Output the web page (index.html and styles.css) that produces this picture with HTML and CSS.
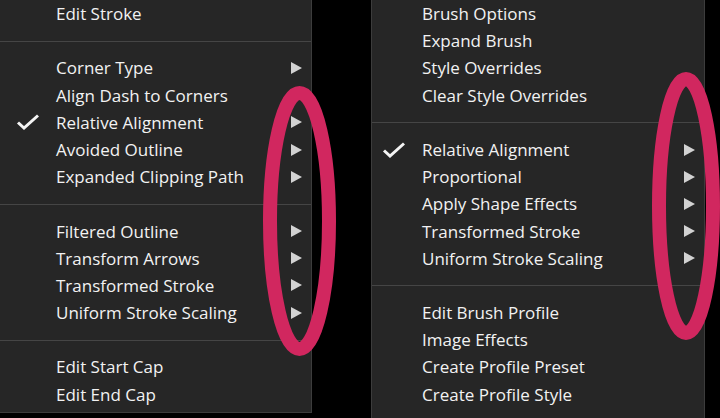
FILE: index.html
```html
<!DOCTYPE html>
<html lang="en">
<head>
    <meta charset="UTF-8">
    <title>Context Menus</title>
    <link rel="stylesheet" href="styles.css">
</head>
<body>
<div class="stage">

    <div class="menu menu-stroke">
        <div class="item"><span class="check"></span><span class="label">Edit Stroke</span></div>
        <div class="sep"></div>
        <div class="item"><span class="check"></span><span class="label">Corner Type</span><span class="arrow"></span></div>
        <div class="item"><span class="check"></span><span class="label">Align Dash to Corners</span></div>
        <div class="item"><span class="check"><svg width="24" height="16" viewBox="0 0 24 16"><polyline points="2,8.5 8,14 22,1.5" /></svg></span><span class="label">Relative Alignment</span><span class="arrow"></span></div>
        <div class="item"><span class="check"></span><span class="label">Avoided Outline</span><span class="arrow"></span></div>
        <div class="item"><span class="check"></span><span class="label">Expanded Clipping Path</span><span class="arrow"></span></div>
        <div class="sep"></div>
        <div class="item"><span class="check"></span><span class="label">Filtered Outline</span><span class="arrow"></span></div>
        <div class="item"><span class="check"></span><span class="label">Transform Arrows</span><span class="arrow"></span></div>
        <div class="item"><span class="check"></span><span class="label">Transformed Stroke</span><span class="arrow"></span></div>
        <div class="item"><span class="check"></span><span class="label">Uniform Stroke Scaling</span><span class="arrow"></span></div>
        <div class="sep"></div>
        <div class="item"><span class="check"></span><span class="label">Edit Start Cap</span></div>
        <div class="item"><span class="check"></span><span class="label">Edit End Cap</span></div>
    </div>

    <div class="menu menu-brush">
        <div class="item"><span class="check"></span><span class="label">Brush Options</span></div>
        <div class="item"><span class="check"></span><span class="label">Expand Brush</span></div>
        <div class="item"><span class="check"></span><span class="label">Style Overrides</span></div>
        <div class="item"><span class="check"></span><span class="label">Clear Style Overrides</span></div>
        <div class="sep"></div>
        <div class="item"><span class="check"><svg width="24" height="16" viewBox="0 0 24 16"><polyline points="2,8.5 8,14 22,1.5" /></svg></span><span class="label">Relative Alignment</span><span class="arrow"></span></div>
        <div class="item"><span class="check"></span><span class="label">Proportional</span><span class="arrow"></span></div>
        <div class="item"><span class="check"></span><span class="label">Apply Shape Effects</span><span class="arrow"></span></div>
        <div class="item"><span class="check"></span><span class="label">Transformed Stroke</span><span class="arrow"></span></div>
        <div class="item"><span class="check"></span><span class="label">Uniform Stroke Scaling</span><span class="arrow"></span></div>
        <div class="sep"></div>
        <div class="item"><span class="check"></span><span class="label">Edit Brush Profile</span></div>
        <div class="item"><span class="check"></span><span class="label">Image Effects</span></div>
        <div class="item"><span class="check"></span><span class="label">Create Profile Preset</span></div>
        <div class="item"><span class="check"></span><span class="label">Create Profile Style</span></div>
    </div>

    <!-- hand-drawn highlight rings over the submenu arrows -->
    <svg class="marks" width="720" height="418" viewBox="0 0 720 418">
        <ellipse cx="299.5" cy="221" rx="29.5" ry="128" />
        <ellipse cx="686" cy="206" rx="27" ry="127" />
    </svg>

</div>
</body>
</html>
```

FILE: styles.css
```css
body {
    margin: 0;
    background-color: #000;
    font-family: "Open Sans", "Noto Sans", sans-serif;
    overflow: hidden;
}
.stage {
    position: relative;
    display: flex;
    align-items: flex-start;
    width: 720px;
    height: 418px;
    overflow: hidden;
}
.menu {
    box-sizing: border-box;
    background-color: #262626;
    color: #f2f2f2;
    font-size: 17px;
}
.menu-stroke {
    width: 312px;
    padding: 0 9px 4px 16px;
    border-right: 1px solid #3c3c3c;
    border-bottom: 1px solid #3c3c3c;
}
.menu-brush {
    width: 334px;
    height: 440px;
    margin-left: 59px;
    padding: 0 9px 0 10px;
    border-left: 1px solid #3c3c3c;
    border-right: 1px solid #3c3c3c;
}
.item {
    display: flex;
    align-items: center;
    height: 27.2px;
    white-space: nowrap;
}
.check {
    flex: none;
    width: 40px;
    display: flex;
    align-items: center;
}
.check svg polyline {
    fill: none;
    stroke: #f4f4f4;
    stroke-width: 3;
}
.label {
    flex: 1;
    line-height: 27.2px;
}
.arrow {
    flex: none;
    width: 0;
    height: 0;
    border-left: 11px solid #d2d2d2;
    border-top: 6px solid transparent;
    border-bottom: 6px solid transparent;
}
.sep {
    height: 13.6px;
    margin-bottom: 12.6px;
    border-bottom: 1px solid #454545;
}
.menu-stroke .sep {
    margin-left: -16px;
    margin-right: -9px;
}
.menu-brush .sep {
    margin-left: -10px;
    margin-right: -9px;
}
.marks {
    position: absolute;
    left: 0;
    top: 0;
    pointer-events: none;
}
.marks ellipse {
    fill: none;
    stroke: #d1275f;
    stroke-width: 14;
}
```
